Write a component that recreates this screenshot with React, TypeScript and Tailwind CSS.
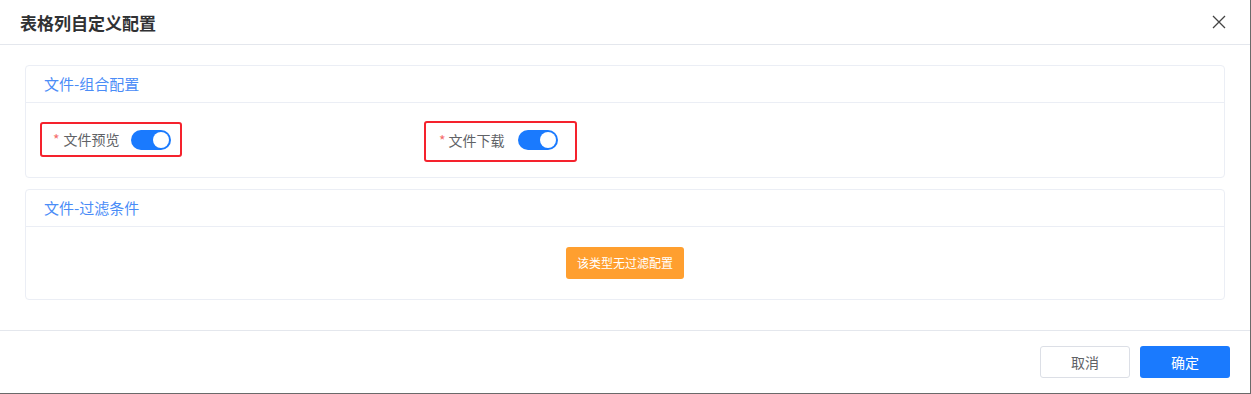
import React from "react";

const font = { fontFamily: '"Noto Sans CJK SC", "Noto Sans", sans-serif' };

const Toggle = () => (
  <div className="relative w-[40px] h-[20px] rounded-full bg-[#1a7afe] shrink-0">
    <div className="absolute right-[2px] top-[2px] w-[16px] h-[16px] rounded-full bg-white" />
  </div>
);

const Card = ({ title, children }: { title: string; children: React.ReactNode }) => (
  <div className="border border-[#ebeef5] rounded-[4px] bg-white">
    <div className="h-[37px] border-b border-[#ebeef5] flex items-center pl-[18px] text-[15px] text-[#4a8cf7]">
      {title}
    </div>
    {children}
  </div>
);

export default function App() {
  return (
    <div
      className="w-[1251px] h-[394px] bg-white border-r border-b border-[#6a6a6a] flex flex-col overflow-hidden"
      style={font}
    >
      {/* header */}
      <div className="h-[45px] border-b border-[#e4e7ed] flex items-center justify-between pl-[20px] pr-[24px] shrink-0">
        <span className="text-[17px] font-bold text-[#303133] leading-none">表格列自定义配置</span>
        <svg width="14" height="14" viewBox="0 0 14 14" className="text-[#444]">
          <path d="M1 1L13 13M13 1L1 13" stroke="currentColor" strokeWidth="1.3" />
        </svg>
      </div>

      {/* body */}
      <div className="flex-1 px-[25px] pt-[20px] flex flex-col gap-[11px]">
        <Card title="文件-组合配置">
          <div className="h-[74px] flex items-start">
            <div className="ml-[14px] mt-[19px] w-[142px] h-[35px] border-2 border-[#f5222d] rounded-[3px] flex items-center pl-[11px] text-[14px]">
              <span className="text-[#f56c6c] mr-[4px]">*</span>
              <span className="text-[#606266] mr-[11px]">文件预览</span>
              <Toggle />
            </div>
            <div className="ml-[242px] mt-[18px] w-[153px] h-[41px] border-2 border-[#f5222d] rounded-[3px] flex items-center pl-[13px] pb-[3px] text-[14px]">
              <span className="text-[#f56c6c] mr-[3px]">*</span>
              <span className="text-[#606266] mr-[13px]">文件下载</span>
              <Toggle />
            </div>
          </div>
        </Card>
        <Card title="文件-过滤条件">
          <div className="h-[72px] flex items-center justify-center">
            <div className="w-[118px] h-[32px] rounded-[3px] bg-[#ff9f2f] text-white text-[12px] flex items-center justify-center">
              该类型无过滤配置
            </div>
          </div>
        </Card>
      </div>

      {/* footer */}
      <div className="h-[63px] border-t border-[#e4e7ed] flex justify-end items-start pt-[15px] pr-[20px] gap-[10px] shrink-0">
        <button className="w-[90px] h-[32px] border border-[#dcdfe6] rounded-[3px] bg-white text-[14px] text-[#606266]">
          取消
        </button>
        <button className="w-[90px] h-[32px] rounded-[3px] bg-[#1a7afe] text-[14px] text-white">确定</button>
      </div>
    </div>
  );
}
